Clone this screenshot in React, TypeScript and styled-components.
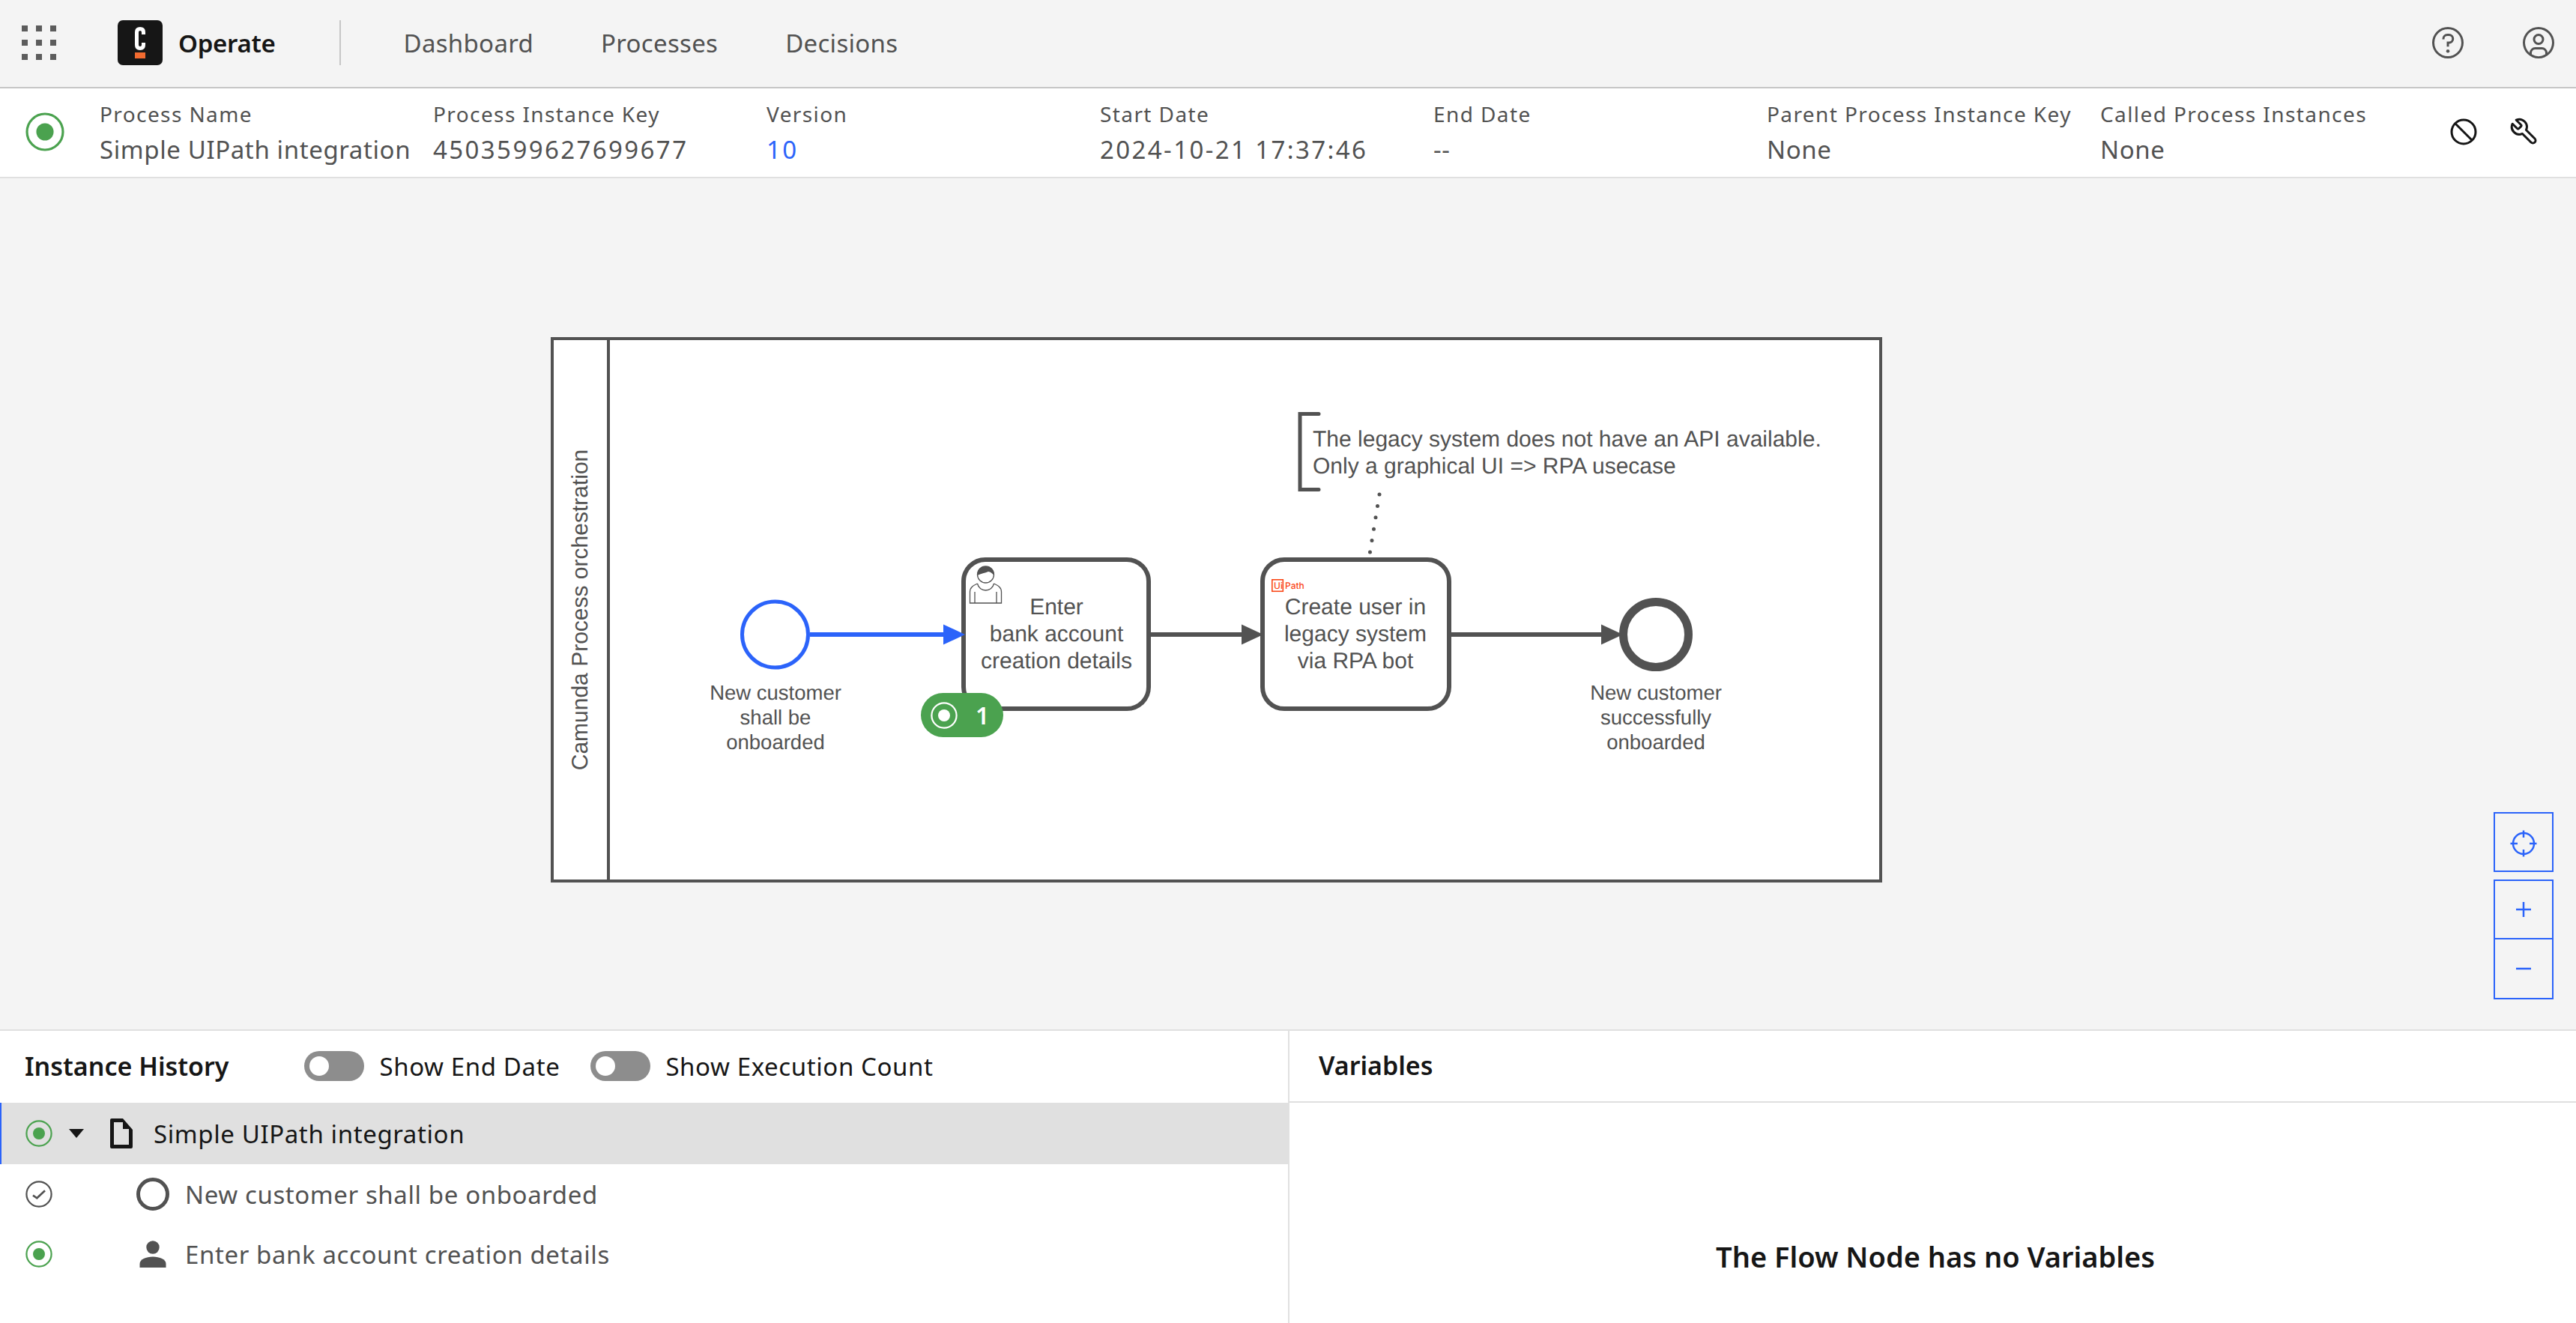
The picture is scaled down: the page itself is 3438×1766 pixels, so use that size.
import React from 'react';
import styled, { createGlobalStyle } from 'styled-components';

const blue = '#2b63fa';
const green = '#4ba24f';
const ink = '#161616';
const grey = '#525252';
const plex = '"Noto Sans", "Open Sans", sans-serif';
const arial = '"Liberation Sans", Arial, sans-serif';

const GlobalStyle = createGlobalStyle`
  html, body { margin: 0; padding: 0; background: #f4f4f4; }
  body { font-family: ${plex}; color: ${grey}; }
  * { box-sizing: border-box; }
`;

const Page = styled.div`
  display: flex;
  flex-direction: column;
  width: 100%;
  height: 100vh;
  overflow: hidden;
`;

// top bar
const TopBar = styled.header`
  display: flex;
  align-items: center;
  flex: 0 0 118px;
  padding: 0 26px 2px 29px;
  background: #f4f4f4;
  border-bottom: 2px solid #c6c6c6;
`;

const Logo = styled.div`
  display: flex;
  flex-direction: column;
  align-items: center;
  width: 60px;
  height: 60px;
  margin-left: 82px;
  padding-top: 9px;
  border-radius: 7px;
  background: ${ink};
`;

const Brand = styled.span`
  margin-left: 21px;
  font-size: 33px;
  font-weight: 600;
  color: ${ink};
  letter-spacing: -0.3px;
`;

const Divider = styled.span`
  width: 2px;
  height: 60px;
  margin-left: 85px;
  background: #c6c6c6;
`;

const Nav = styled.nav`
  display: flex;
  flex: 1;
  margin-left: 84px;
  gap: 90px;
`;

const NavLink = styled.a`
  font-size: 33px;
  color: ${grey};
  letter-spacing: 0.3px;
`;

const HeaderIcons = styled.div`
  display: flex;
  gap: 73px;
`;

// instance details strip
const Details = styled.section`
  display: flex;
  align-items: center;
  flex: 0 0 120px;
  padding-bottom: 3px;
  background: #fff;
  border-bottom: 2px solid #e0e0e0;
`;

const DetailStatus = styled.div`
  display: flex;
  justify-content: center;
  width: 133px;
  padding-right: 13px;
`;

const DetailGrid = styled.div`
  display: grid;
  grid-template-columns: repeat(7, 445px);
`;

const DetailCell = styled.div`
  display: flex;
  flex-direction: column;
  gap: 12px;
`;

const DetailLabel = styled.span`
  font-size: 28px;
  line-height: 36px;
  color: ${grey};
  letter-spacing: 1.4px;
  white-space: nowrap;
`;

const DetailValue = styled.span<{ $link?: boolean; $numeric?: boolean }>`
  font-size: 33px;
  line-height: 36px;
  color: ${(p) => (p.$link ? blue : grey)};
  letter-spacing: ${(p) => (p.$numeric ? '2.4px' : '0.6px')};
  white-space: nowrap;
`;

const DetailActions = styled.div`
  display: flex;
  align-items: center;
  gap: 43px;
  margin-left: 22px;
`;

// diagram
const Canvas = styled.main`
  position: relative;
  flex: 1;
  min-height: 0;
  background: #f4f4f4;
  border-bottom: 2px solid #e0e0e0;
`;

const DiagramSvg = styled.svg`
  display: block;
  width: 100%;
  height: 100%;
  text-rendering: geometricPrecision;
`;

const Badge = styled.div`
  position: absolute;
  left: 1229px;
  top: 687px;
  display: flex;
  align-items: center;
  gap: 24px;
  width: 110px;
  height: 59px;
  padding-left: 13px;
  border-radius: 30px;
  background: ${green};
  color: #fff;
  font-size: 32px;
  font-weight: 600;
`;

const ZoomControls = styled.div`
  position: absolute;
  right: 30px;
  bottom: 40px;
  display: flex;
  flex-direction: column;
  width: 80px;
`;

const ZoomButton = styled.button<{ $gap?: boolean; $joined?: boolean }>`
  display: flex;
  align-items: center;
  justify-content: center;
  height: 80px;
  padding: 0;
  margin-bottom: ${(p) => (p.$gap ? '10px' : '0')};
  border: 2px solid ${blue};
  border-top-width: ${(p) => (p.$joined ? '0' : '2px')};
  background: #f4f4f4;
`;

// bottom panels
const BottomPanels = styled.div`
  display: grid;
  grid-template-columns: 1721px 1fr;
  flex: 0 0 390px;
  background: #fff;
`;

const HistoryPanel = styled.section`
  display: flex;
  flex-direction: column;
  border-right: 2px solid #e0e0e0;
`;

const HistoryHeader = styled.div`
  display: flex;
  align-items: center;
  flex: 0 0 96px;
  padding: 0 0 2px 33px;
`;

const PanelTitle = styled.h2`
  margin: 0;
  font-size: 34px;
  font-weight: 600;
  color: ${ink};
`;

const ToggleGroup = styled.div`
  display: flex;
  align-items: center;
  margin-left: 101px;
  gap: 41px;
`;

const ToggleField = styled.label`
  display: flex;
  align-items: center;
  gap: 20px;
  font-size: 33px;
  color: ${ink};
  letter-spacing: 0.6px;
`;

const ToggleTrack = styled.span`
  position: relative;
  width: 80px;
  height: 40px;
  border-radius: 20px;
  background: #8d8d8d;

  &::before {
    content: '';
    position: absolute;
    left: 7px;
    top: 7px;
    width: 26px;
    height: 26px;
    border-radius: 50%;
    background: #fff;
  }
`;

const Row = styled.div<{ $selected?: boolean }>`
  display: flex;
  align-items: center;
  flex: 0 0 ${(p) => (p.$selected ? '82px' : '80px')};
  padding-left: 34px;
  background: ${(p) => (p.$selected ? '#e0e0e0' : 'transparent')};
  box-shadow: ${(p) => (p.$selected ? `inset 2px 0 0 ${blue}` : 'none')};
`;

const Caret = styled.span`
  width: 0;
  height: 0;
  margin-left: 22px;
  border-left: 10px solid transparent;
  border-right: 10px solid transparent;
  border-top: 12px solid ${ink};
`;

const FlowIconSlot = styled.span`
  display: flex;
  justify-content: center;
  width: 44px;
  margin-left: 112px;
`;

const RowText = styled.span<{ $selected?: boolean }>`
  margin-left: ${(p) => (p.$selected ? '28px' : '21px')};
  font-size: 33px;
  color: ${(p) => (p.$selected ? ink : grey)};
  letter-spacing: 0.6px;
`;

const VariablesPanel = styled.section`
  display: flex;
  flex-direction: column;
`;

const VariablesHeader = styled.div`
  display: flex;
  align-items: center;
  flex: 0 0 96px;
  padding: 0 0 2px 39px;
  border-bottom: 2px solid #e0e0e0;
`;

const EmptyState = styled.div`
  display: flex;
  flex: 1;
  align-items: center;
  justify-content: center;
  padding: 116px 0 0 7px;
  font-size: 38px;
  font-weight: 600;
  color: ${ink};
`;

const FlowLabel = styled.text`
  font-family: ${arial};
  font-size: 27.5px;
  fill: ${grey};
  text-anchor: middle;
`;

const TaskLabel = styled.text`
  font-family: ${arial};
  font-size: 30px;
  fill: ${grey};
  text-anchor: middle;
`;

const NoteLabel = styled.text`
  font-family: ${arial};
  font-size: 30px;
  fill: ${grey};
`;

const LogoText = styled.text`
  font-family: "Inter", sans-serif;
  font-size: 12px;
  font-weight: 500;
  fill: #fa4616;
`;

function AppsIcon() {
  const cells = [0, 19, 38];
  return (
    <svg width="46" height="46" viewBox="0 0 46 46" fill="#5c5c5c">
      {cells.map((y) => cells.map((x) => <rect key={`${x}-${y}`} x={x} y={y} width="8" height="8" />))}
    </svg>
  );
}

function HelpIcon() {
  return (
    <svg width="48" height="48" viewBox="0 0 32 32" fill={grey}>
      <path d="M16 2a14 14 0 1 0 14 14A14 14 0 0 0 16 2Zm0 26a12 12 0 1 1 12-12 12 12 0 0 1-12 12Z" />
      <circle cx="16" cy="23.5" r="1.5" />
      <path d="M17 8h-1.5a4.49 4.49 0 0 0-4.5 4.5v.5h2v-.5a2.5 2.5 0 0 1 2.5-2.5H17a2.5 2.5 0 0 1 0 5h-2v4.5h2V17a4.5 4.5 0 0 0 0-9Z" />
    </svg>
  );
}

function UserIcon() {
  return (
    <svg width="48" height="48" viewBox="0 0 32 32" fill={grey}>
      <path d="M16 8a5 5 0 1 0 5 5 5 5 0 0 0-5-5Zm0 8a3 3 0 1 1 3-3 3.003 3.003 0 0 1-3 3Z" />
      <path d="M16 2a14 14 0 1 0 14 14A14.016 14.016 0 0 0 16 2Zm-6 24.377V25a3.003 3.003 0 0 1 3-3h6a3.003 3.003 0 0 1 3 3v1.377a11.899 11.899 0 0 1-12 0Zm13.993-1.451A5.002 5.002 0 0 0 19 20h-6a5.002 5.002 0 0 0-4.992 4.926 12 12 0 1 1 15.985 0Z" />
    </svg>
  );
}

function CancelIcon() {
  return (
    <svg width="36" height="36" viewBox="0 0 36 36" fill="none" stroke={ink} strokeWidth="3">
      <circle cx="18" cy="18" r="16" />
      <path d="M7 7 L29 29" />
    </svg>
  );
}

function WrenchIcon() {
  return (
    <svg width="40" height="40" viewBox="0 0 24 24" fill="none" stroke={ink} strokeWidth="1.8" strokeLinejoin="round" style={{ transform: 'scaleX(-1)' }}>
      <path d="M14.7 6.3a1 1 0 0 0 0 1.4l1.6 1.6a1 1 0 0 0 1.4 0l3.77-3.77a6 6 0 0 1-7.94 7.94l-6.91 6.91a2.12 2.12 0 0 1-3-3l6.91-6.91a6 6 0 0 1 7.94-7.94l-3.76 3.76z" />
    </svg>
  );
}

function ActiveIcon({ size = 36, color = green }: { size?: number; color?: string }) {
  return (
    <svg width={size} height={size} viewBox="0 0 36 36" fill="none">
      <circle cx="18" cy="18" r="16.6" stroke={color} strokeWidth="2.2" />
      <circle cx="18" cy="18" r="8" fill={color} />
    </svg>
  );
}

function CompletedIcon() {
  return (
    <svg width="36" height="36" viewBox="0 0 36 36" fill="none" stroke={grey}>
      <circle cx="18" cy="18" r="16.6" strokeWidth="2.2" />
      <path d="M10 19.7 L15.3 23.3 L26 13.3" strokeWidth="2.6" />
    </svg>
  );
}

function ProcessIcon() {
  return (
    <svg width="30" height="40" viewBox="0 0 30 40" fill={ink} style={{ marginLeft: 35 }}>
      <path fillRule="evenodd" d="M2 0H17L30 15V38a2 2 0 0 1-2 2H2a2 2 0 0 1-2-2V2a2 2 0 0 1 2-2ZM5 5V35H25V14H17V5Z" />
    </svg>
  );
}

function EventIcon() {
  return (
    <svg width="44" height="44" viewBox="0 0 44 44" fill="none" stroke={grey} strokeWidth="5">
      <circle cx="22" cy="22" r="19.5" />
    </svg>
  );
}

function PersonIcon() {
  return (
    <svg width="36" height="36" viewBox="0 0 36 36" fill={grey}>
      <circle cx="18" cy="9" r="8.7" />
      <path d="M0.5 36V31C0.5 25 9 21.5 18 21.5S35.5 25 35.5 31V36Z" />
    </svg>
  );
}

function Arrow({ from, to, color = grey }: { from: number; to: number; color?: string }) {
  return (
    <g>
      <path d={`M${from} 847H${to - 20}`} stroke={color} strokeWidth="6" fill="none" />
      <path d={`M${to - 29} 833.5L${to} 847L${to - 29} 860.5Z`} fill={color} />
    </g>
  );
}

function Diagram() {
  return (
    <DiagramSvg viewBox="0 238 3438 1136" preserveAspectRatio="xMinYMin">
      <rect x="737" y="452" width="1773" height="724" fill="#fff" stroke={grey} strokeWidth="4" />
      <path d="M812 452V1176" stroke={grey} strokeWidth="4" />
      <TaskLabel transform="rotate(-90 784 814)" x="784" y="814">Camunda Process orchestration</TaskLabel>

      <circle cx="1034.5" cy="847" r="44" fill="#fff" stroke={blue} strokeWidth="5" />
      <FlowLabel x="1035" y="934">New customer</FlowLabel>
      <FlowLabel x="1035" y="967">shall be</FlowLabel>
      <FlowLabel x="1035" y="1000">onboarded</FlowLabel>

      <rect x="1286" y="747" width="247" height="199" rx="29" fill="#fff" stroke={grey} strokeWidth="6" />
      <Arrow from={1081} to={1288} color={blue} />
      <path d="M1304.5 779C1299 781.5 1294.5 784 1294.5 790V805H1336.5V790C1336.5 784 1332 781.5 1326.5 779M1304.5 779C1307 791 1324 791 1326.5 779M1301 790V805M1330 790V805" fill="none" stroke={grey} strokeWidth="1.3" />
      <circle cx="1315.5" cy="767" r="11" fill="#fff" stroke={grey} strokeWidth="1.3" />
      <path d="M1304.5 768C1303.5 760 1309 756 1315.5 756S1327.500 760 1326.500 768C1324 765 1322 763.500 1319 763C1315 764.500 1309 766 1304.500 768Z" fill={grey} />
      <TaskLabel x="1410" y="820">Enter</TaskLabel>
      <TaskLabel x="1410" y="856">bank account</TaskLabel>
      <TaskLabel x="1410" y="892">creation details</TaskLabel>

      <rect x="1685" y="747" width="249" height="199" rx="29" fill="#fff" stroke={grey} strokeWidth="6" />
      <Arrow from={1535} to={1686} />
      <rect x="1697.800" y="773.800" width="14.500" height="15.500" fill="#fff" stroke="#fa4616" strokeWidth="1.600" />
      <LogoText x="1700" y="786">Ui</LogoText>
      <LogoText x="1715" y="786">Path</LogoText>
      <TaskLabel x="1809" y="820">Create user in</TaskLabel>
      <TaskLabel x="1809" y="856">legacy system</TaskLabel>
      <TaskLabel x="1809" y="892">via RPA bot</TaskLabel>

      <circle cx="2210" cy="847" r="43.500" fill="#fff" stroke={grey} strokeWidth="11" />
      <Arrow from={1935} to={2166} />
      <FlowLabel x="2210" y="934">New customer</FlowLabel>
      <FlowLabel x="2210" y="967">successfully</FlowLabel>
      <FlowLabel x="2210" y="1000">onboarded</FlowLabel>

      <path d="M1760 552.500H1735V653.500H1760" fill="none" stroke={grey} strokeWidth="5" strokeLinecap="round" />
      <NoteLabel x="1752" y="596">The legacy system does not have an API available.</NoteLabel>
      <NoteLabel x="1752" y="632">Only a graphical UI =&gt; RPA usecase</NoteLabel>
      <path d="M1841 660L1827 746" fill="none" stroke={grey} strokeWidth="5" strokeLinecap="round" strokeDasharray="0 15.600" />
    </DiagramSvg>
  );
}

const details = [
  { label: 'Process Name', value: 'Simple UIPath integration' },
  { label: 'Process Instance Key', value: '4503599627699677', numeric: true },
  { label: 'Version', value: '10', link: true, numeric: true },
  { label: 'Start Date', value: '2024-10-21 17:37:46', numeric: true },
  { label: 'End Date', value: '--' },
  { label: 'Parent Process Instance Key', value: 'None' },
  { label: 'Called Process Instances', value: 'None' },
];

export default function App() {
  return (
    <Page>
      <GlobalStyle />
      <TopBar>
        <AppsIcon />
        <Logo>
          <svg width="14" height="42" viewBox="0 0 14 42">
            <path d="M7 2.500C4 2.500 2.500 4 2.500 7V24C2.500 27 4 28.500 7 28.500S11.500 27 11.500 24V21M11.500 10V7C11.500 4 10 2.500 7 2.500" fill="none" stroke="#fff" strokeWidth="5" />
            <rect x="0" y="34" width="14" height="8" fill="#f26b30" />
          </svg>
        </Logo>
        <Brand>Operate</Brand>
        <Divider />
        <Nav>
          <NavLink>Dashboard</NavLink>
          <NavLink>Processes</NavLink>
          <NavLink>Decisions</NavLink>
        </Nav>
        <HeaderIcons>
          <HelpIcon />
          <UserIcon />
        </HeaderIcons>
      </TopBar>

      <Details>
        <DetailStatus>
          <ActiveIcon size={52} />
        </DetailStatus>
        <DetailGrid>
          {details.map((d) => (
            <DetailCell key={d.label}>
              <DetailLabel>{d.label}</DetailLabel>
              <DetailValue $link={d.link} $numeric={d.numeric}>{d.value}</DetailValue>
            </DetailCell>
          ))}
        </DetailGrid>
        <DetailActions>
          <CancelIcon />
          <WrenchIcon />
        </DetailActions>
      </Details>

      <Canvas>
        <Diagram />
        <Badge>
          <ActiveIcon color="#fff" />
          1
        </Badge>
        <ZoomControls>
          <ZoomButton $gap>
            <svg width="36" height="36" viewBox="0 0 36 36" fill="none" stroke={blue} strokeWidth="2.500" style={{ marginTop: 4 }}>
              <circle cx="18" cy="18" r="14" />
              <path d="M18 0.500V10M18 26V35.500M0.500 18H10M26 18H35.500" />
            </svg>
          </ZoomButton>
          <ZoomButton>
            <svg width="20" height="20" viewBox="0 0 20 20" fill="none" stroke={blue} strokeWidth="2.500">
              <path d="M10 0V20M0 10H20" />
            </svg>
          </ZoomButton>
          <ZoomButton $joined>
            <svg width="20" height="4" viewBox="0 0 20 4" fill="none" stroke={blue} strokeWidth="2.500">
              <path d="M0 2H20" />
            </svg>
          </ZoomButton>
        </ZoomControls>
      </Canvas>

      <BottomPanels>
        <HistoryPanel>
          <HistoryHeader>
            <PanelTitle>Instance History</PanelTitle>
            <ToggleGroup>
              <ToggleField>
                <ToggleTrack />
                Show End Date
              </ToggleField>
              <ToggleField>
                <ToggleTrack />
                Show Execution Count
              </ToggleField>
            </ToggleGroup>
          </HistoryHeader>
          <Row $selected>
            <ActiveIcon />
            <Caret />
            <ProcessIcon />
            <RowText $selected>Simple UIPath integration</RowText>
          </Row>
          <Row>
            <CompletedIcon />
            <FlowIconSlot>
              <EventIcon />
            </FlowIconSlot>
            <RowText>New customer shall be onboarded</RowText>
          </Row>
          <Row>
            <ActiveIcon />
            <FlowIconSlot>
              <PersonIcon />
            </FlowIconSlot>
            <RowText>Enter bank account creation details</RowText>
          </Row>
        </HistoryPanel>
        <VariablesPanel>
          <VariablesHeader>
            <PanelTitle>Variables</PanelTitle>
          </VariablesHeader>
          <EmptyState>The Flow Node has no Variables</EmptyState>
        </VariablesPanel>
      </BottomPanels>
    </Page>
  );
}
